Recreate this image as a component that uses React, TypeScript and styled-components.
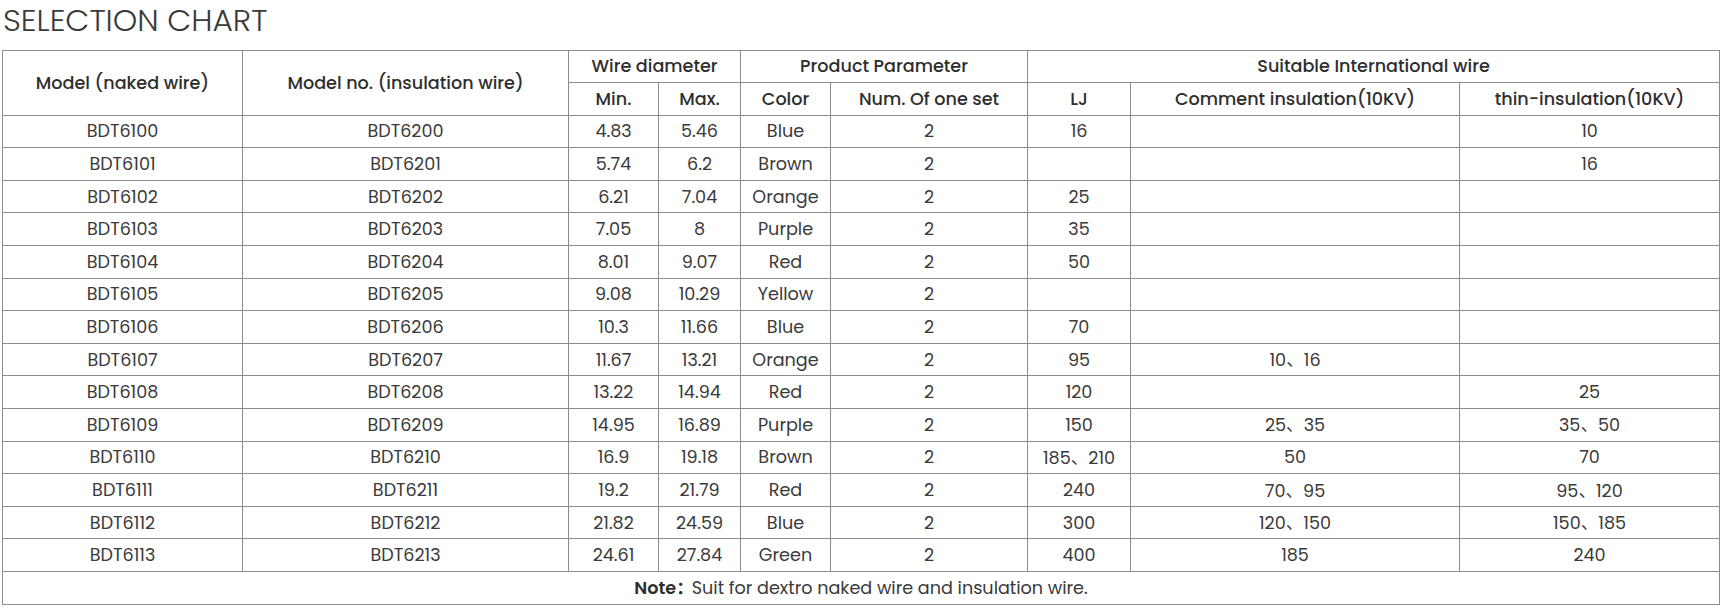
import React from "react";
import styled, { createGlobalStyle } from "styled-components";

const Global = createGlobalStyle`
  html, body { margin: 0; padding: 0; background: #fff; }
  body { font-family: "Poppins", "Inter", "Noto Sans CJK SC", sans-serif; color: #333; }
`;

const Page = styled.div`
  padding: 0 0 0 2px;
`;

const Title = styled.h2`
  margin: 0;
  padding: 0 0 0 1px;
  height: 49.5px;
  font-size: 31.2px;
  line-height: 40px;
  font-weight: 300;
  color: #3a3a3a;
`;

const Table = styled.table`
  width: 1717px;
  table-layout: fixed;
  border-collapse: collapse;
  font-size: 17.6px;
  color: #333;
`;

const Cell = styled.td<{ $head?: boolean }>`
  border: 1px solid #8c8c8c;
  height: 31.6px;
  padding: 0;
  text-align: center;
  vertical-align: middle;
  font-weight: ${(p) => (p.$head ? 500 : 400)};
  color: ${(p) => (p.$head ? "#2e2e2e" : "#3a3a3a")};
  white-space: nowrap;
`;

const Bold = styled.b`
  font-weight: 600;
  color: #2e2e2e;
  margin-right: -2px;
`;

const widths = [240, 326, 90, 82, 90, 197, 103, 329, 260];

const rows: string[][] = [
  ["BDT6100", "BDT6200", "4.83", "5.46", "Blue", "2", "16", "", "10"],
  ["BDT6101", "BDT6201", "5.74", "6.2", "Brown", "2", "", "", "16"],
  ["BDT6102", "BDT6202", "6.21", "7.04", "Orange", "2", "25", "", ""],
  ["BDT6103", "BDT6203", "7.05", "8", "Purple", "2", "35", "", ""],
  ["BDT6104", "BDT6204", "8.01", "9.07", "Red", "2", "50", "", ""],
  ["BDT6105", "BDT6205", "9.08", "10.29", "Yellow", "2", "", "", ""],
  ["BDT6106", "BDT6206", "10.3", "11.66", "Blue", "2", "70", "", ""],
  ["BDT6107", "BDT6207", "11.67", "13.21", "Orange", "2", "95", "10、16", ""],
  ["BDT6108", "BDT6208", "13.22", "14.94", "Red", "2", "120", "", "25"],
  ["BDT6109", "BDT6209", "14.95", "16.89", "Purple", "2", "150", "25、35", "35、50"],
  ["BDT6110", "BDT6210", "16.9", "19.18", "Brown", "2", "185、210", "50", "70"],
  ["BDT6111", "BDT6211", "19.2", "21.79", "Red", "2", "240", "70、95", "95、120"],
  ["BDT6112", "BDT6212", "21.82", "24.59", "Blue", "2", "300", "120、150", "150、185"],
  ["BDT6113", "BDT6213", "24.61", "27.84", "Green", "2", "400", "185", "240"],
];

export default function App() {
  return (
    <Page>
      <Global />
      <Title>SELECTION CHART</Title>
      <Table>
        <colgroup>
          {widths.map((w, i) => (
            <col key={i} style={{ width: w }} />
          ))}
        </colgroup>
        <thead>
          <tr>
            <Cell as="th" $head rowSpan={2}>Model (naked wire)</Cell>
            <Cell as="th" $head rowSpan={2}>Model no. (insulation wire)</Cell>
            <Cell as="th" $head colSpan={2}>Wire diameter</Cell>
            <Cell as="th" $head colSpan={2}>Product Parameter</Cell>
            <Cell as="th" $head colSpan={3}>Suitable International wire</Cell>
          </tr>
          <tr>
            <Cell as="th" $head>Min.</Cell>
            <Cell as="th" $head>Max.</Cell>
            <Cell as="th" $head>Color</Cell>
            <Cell as="th" $head>Num. Of one set</Cell>
            <Cell as="th" $head>LJ</Cell>
            <Cell as="th" $head>Comment insulation(10KV)</Cell>
            <Cell as="th" $head>thin-insulation(10KV)</Cell>
          </tr>
        </thead>
        <tbody>
          {rows.map((r, i) => (
            <tr key={i}>
              {r.map((c, j) => (
                <Cell key={j}>{c}</Cell>
              ))}
            </tr>
          ))}
          <tr>
            <Cell colSpan={9}>
              <Bold>Note：</Bold>Suit for dextro naked wire and insulation wire.
            </Cell>
          </tr>
        </tbody>
      </Table>
    </Page>
  );
}
